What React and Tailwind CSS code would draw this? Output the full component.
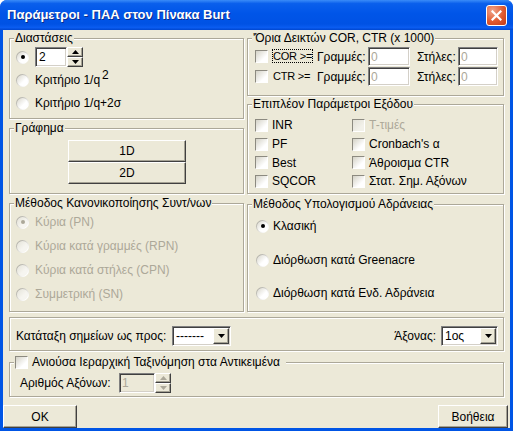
import React from 'react';

const FONT = "font-['Liberation_Sans',Arial,sans-serif]";

const Radio = ({ checked, disabled }) => (
  <span className="w-[13px] h-[13px] shrink-0 rounded-full p-[1px] bg-[linear-gradient(135deg,#9c9a90,#ffffff_80%)]">
    <span
      className={
        'w-full h-full rounded-full flex items-center justify-center ' +
        (disabled
          ? 'bg-[linear-gradient(135deg,#e4e2d8,#f6f5f0_60%)]'
          : 'bg-[linear-gradient(135deg,#d9d7cc,#ffffff_60%)]')
      }
    >
      {checked && (
        <span className={'w-[4px] h-[4px] rounded-full ' + (disabled ? 'bg-[#ACA899]' : 'bg-black')} />
      )}
    </span>
  </span>
);

const Check = ({ disabled }) => (
  <span
    className={
      'w-[13px] h-[13px] shrink-0 border border-t-[#8c8a80] border-l-[#8c8a80] border-r-white border-b-white ' +
      (disabled
        ? 'bg-[linear-gradient(135deg,#e2e0d6,#f2f1ea_70%)]'
        : 'bg-[linear-gradient(135deg,#d4d2c6,#ffffff_70%)]')
    }
  />
);

const raised =
  'bg-[#ECE9D8] border border-t-white border-l-white border-r-[#404040] border-b-[#404040] shadow-[inset_-1px_-1px_0_#A5A294]';
const sunken =
  'border border-t-[#808080] border-l-[#808080] border-r-white border-b-white shadow-[inset_1px_1px_0_#404040,inset_-1px_-1px_0_#D4D0C8]';

const Arrow = ({ up, color = '#000' }) => (
  <svg width="7" height="4" viewBox="0 0 7 4">
    {up ? <polygon points="3.5,0 7,4 0,4" fill={color} /> : <polygon points="0,0 7,0 3.5,4" fill={color} />}
  </svg>
);

const Spin = ({ disabled }) => (
  <div className="flex flex-col w-[16px] h-[20px]">
    <div className={raised + ' h-[10px] flex items-center justify-center'}>
      <Arrow up color={disabled ? '#ACA899' : '#000'} />
    </div>
    <div className={raised + ' h-[10px] flex items-center justify-center'}>
      <Arrow color={disabled ? '#ACA899' : '#000'} />
    </div>
  </div>
);

const Combo = ({ value, className }) => (
  <div className={sunken + ' bg-white h-[20px] flex items-center ' + className}>
    <span className="flex-1 pl-[3px] leading-none">{value}</span>
    <div className={raised + ' w-[16px] h-[16px] mr-[1px] flex items-center justify-center'}>
      <Arrow />
    </div>
  </div>
);

const GroupBox = ({ title, className, children }) => (
  <div className={'relative pt-[7px] flex flex-col ' + className}>
    <div className="flex-1 border border-[#ACA899] shadow-[inset_1px_1px_0_#fff,1px_1px_0_#fff] flex flex-col">
      {children}
    </div>
    {title && (
      <span className="absolute top-0 left-[5px] px-[1px] bg-[#ECE9D8] leading-[14px] whitespace-nowrap">{title}</span>
    )}
  </div>
);

const LimitRow = ({ label, focused }) => (
  <div className="h-[19px] ml-[7px] flex items-center">
    <Check />
    <span className="w-[45px] ml-[4px] shrink-0 text-[11px] tracking-[-0.2px]">
      <span className={'border border-dotted ' + (focused ? 'border-black' : 'border-transparent')}>
        {label}
      </span>
    </span>
    <span className="w-[51px] shrink-0">Γραμμές:</span>
    <div className={sunken + ' bg-white w-[42px] h-[19px] pl-[2px] flex items-center text-[#ACA899]'}>0</div>
    <span className="w-[41px] ml-[7px] shrink-0">Στήλες:</span>
    <div className={sunken + ' bg-white w-[40px] h-[19px] pl-[2px] flex items-center text-[#ACA899]'}>0</div>
  </div>
);

const CheckItem = ({ label, disabled }) => (
  <div className="flex items-center">
    <Check disabled={disabled} />
    <span className={'ml-[4px] ' + (disabled ? 'text-[#ACA899]' : '')}>{label}</span>
  </div>
);

export default function App() {
  return (
    <div className={'w-[513px] h-[431px] flex flex-col bg-[#0055E5] rounded-t-[7px] overflow-hidden text-[12px] text-black whitespace-nowrap ' + FONT}>
      {/* title bar */}
      <div className="h-[30px] shrink-0 flex items-center pl-[7px] pr-[6px] bg-[linear-gradient(to_bottom,#3A8CF8_0%,#0A5FEC_12%,#0055E8_45%,#0052E4_80%,#0A5CF0_92%,#0046CF_100%)]">
        <span className="flex-1 text-white font-bold text-[13px] [text-shadow:1px_1px_0_#0B2C8A]">
          Παράμετροι - ΠΑΑ στον Πίνακα Burt
        </span>
        <div className="w-[21px] h-[21px] rounded-[3px] border border-white bg-[radial-gradient(circle_at_30%_25%,#F0A58C,#E05A30_55%,#C23A16)] flex items-center justify-center">
          <svg width="11" height="11" viewBox="0 0 11 11">
            <path d="M1.5 1.5 L9.5 9.5 M9.5 1.5 L1.5 9.5" stroke="#fff" strokeWidth="2.2" strokeLinecap="square" />
          </svg>
        </div>
      </div>

      {/* client area */}
      <div className="flex-1 mx-[3px] mb-[3px] bg-[#ECE9D8] flex flex-col">
        <div className="flex mt-[1px] ml-[6px] gap-[3px] h-[281px]">
          {/* left column */}
          <div className="w-[235px] flex flex-col gap-[2px]">
            <GroupBox title="Διαστάσεις" className="h-[88px]">
              <div className="mt-[8px] ml-[6px] h-[20px] flex items-center">
                <Radio checked />
                <div className="ml-[6px] flex">
                  <div className={sunken + ' bg-white w-[32px] h-[20px] pl-[3px] flex items-center'}>2</div>
                  <Spin />
                </div>
              </div>
              <div className="mt-[5px] ml-[6px] h-[16px] flex items-center">
                <Radio />
                <span className="ml-[6px]">
                  Κριτήριο 1/q<span className="relative -top-[5px] ml-[2px]">2</span>
                </span>
              </div>
              <div className="mt-[7px] ml-[6px] h-[16px] flex items-center">
                <Radio />
                <span className="ml-[6px]">Κριτήριο 1/q+2σ</span>
              </div>
            </GroupBox>

            <GroupBox title="Γράφημα" className="h-[73px]">
              <div className="mt-[11px] ml-[58px] w-[118px] flex flex-col">
                <div className={raised + ' h-[22px] flex items-center justify-center'}>1D</div>
                <div className={raised + ' h-[22px] flex items-center justify-center'}>2D</div>
              </div>
            </GroupBox>

            <GroupBox title="Μέθοδος Κανονικοποίησης Συντ/νων" className="h-[116px]">
              <div className="mt-[10px] ml-[6px] flex flex-col gap-[8px] text-[#ACA899]">
                {['Κύρια (PN)', 'Κύρια κατά γραμμές (RPN)', 'Κύρια κατά στήλες (CPN)', 'Συμμετρική (SN)'].map((t, i) => (
                  <div key={t} className="h-[16px] flex items-center">
                    <Radio checked={i === 0} disabled />
                    <span className="ml-[6px]">{t}</span>
                  </div>
                ))}
              </div>
            </GroupBox>
          </div>

          {/* right column */}
          <div className="w-[257px] flex flex-col">
            <GroupBox title="'Όρια Δεικτών COR, CTR (x 1000)" className="h-[65px]">
              <div className="mt-[8px] flex flex-col gap-[1px]">
                <LimitRow label="COR >=" focused />
                <LimitRow label="CTR >=" />
              </div>
            </GroupBox>

            <GroupBox title="Επιπλέον Παράμετροι Εξόδου" className="h-[97px] mt-[1px]">
              <div className="mt-[11px] ml-[7px] grid grid-cols-[97px_1fr] auto-rows-[18.7px]">
                <CheckItem label="INR" />
                <CheckItem label="T-τιμές" disabled />
                <CheckItem label="PF" />
                <CheckItem label="Cronbach's α" />
                <CheckItem label="Best" />
                <CheckItem label="Άθροισμα CTR" />
                <CheckItem label="SQCOR" />
                <CheckItem label="Στατ. Σημ. Αξόνων" />
              </div>
            </GroupBox>

            <GroupBox title="Μέθοδος Υπολογισμού Αδράνειας" className="h-[115px] mt-[3px]">
              <div className="mt-[13px] ml-[8px] h-[16px] flex items-center">
                <Radio checked />
                <span className="ml-[4px]">Κλασική</span>
              </div>
              <div className="mt-[18px] ml-[8px] h-[16px] flex items-center">
                <Radio />
                <span className="ml-[4px]">Διόρθωση κατά Greenacre</span>
              </div>
              <div className="mt-[17px] ml-[8px] h-[16px] flex items-center">
                <Radio />
                <span className="ml-[4px]">Διόρθωση κατά Ενδ. Αδράνεια</span>
              </div>
            </GroupBox>
          </div>
        </div>

        {/* sort */}
        <GroupBox className="h-[34px] w-[495px] ml-[6px] mt-[5px] !pt-0">
          <div className="mt-[8px] ml-[6px] mr-[5px] h-[20px] flex items-center">
            <span className="w-[156px] shrink-0">Κατάταξη σημείων ως προς:</span>
            <Combo value="-------" className="w-[59px]" />
            <span className="ml-auto">Άξονας:</span>
            <Combo value="1ος" className="w-[57px] ml-[5px]" />
          </div>
        </GroupBox>

        {/* hierarchical */}
        <div className="relative pt-[7px] h-[42px] w-[495px] ml-[6px] mt-[4px] flex flex-col">
          <div className="flex-1 border border-[#ACA899] shadow-[inset_1px_1px_0_#fff,1px_1px_0_#fff]">
            <div className="mt-[10px] ml-[10px] h-[20px] flex items-center">
              <span className="w-[99px] shrink-0">Αριθμός Αξόνων:</span>
              <div className={sunken + ' bg-[#ECE9D8] w-[36px] h-[20px] pl-[2px] flex items-center text-[#ACA899]'}>1</div>
              <Spin disabled />
            </div>
          </div>
          <div className="absolute top-0 left-[5px] h-[14px] pl-[1px] pr-[6px] bg-[#ECE9D8] flex items-center">
            <Check />
            <span className="ml-[4px]">Ανιούσα Ιεραρχική Ταξινόμηση στα Αντικειμένα</span>
          </div>
        </div>

        {/* buttons */}
        <div className="mt-auto h-[23px] flex justify-between">
          <div className={raised + ' w-[74px] h-[23px] flex items-center justify-center'}>OK</div>
          <div className={raised + ' w-[70px] h-[23px] mr-[2px] flex items-center justify-center'}>Βοήθεια</div>
        </div>
      </div>
    </div>
  );
}
